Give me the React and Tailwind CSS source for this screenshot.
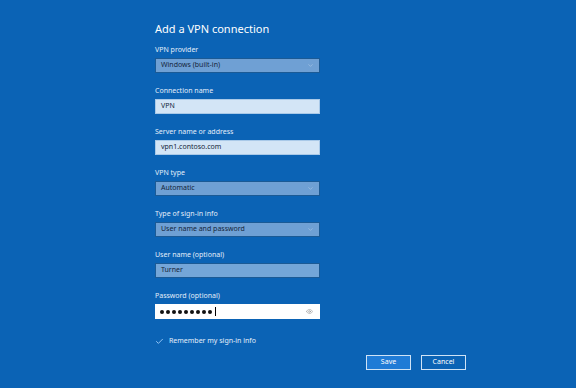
import { Check, ChevronDown, Eye } from "lucide-react";

const labelClass = "h-[10px] text-[7px] leading-[10px] text-[#e3eefa]";

function Field({ label, children }) {
  return (
    <div className="flex flex-col">
      <div className={labelClass}>{label}</div>
      <div className="mt-[3px]">{children}</div>
    </div>
  );
}

function SelectBox({ value }) {
  return (
    <div className="flex h-[15px] w-[165px] items-center justify-between border border-[#1b5a95] bg-[#6fa0d4] pl-[5px] pr-[5px] text-[7px] text-[#14253a]">
      <span>{value}</span>
      <ChevronDown size={7} strokeWidth={1.5} className="text-[#c4d8ec]" />
    </div>
  );
}

function TextBox({ value, variant = "light" }) {
  const styles = {
    light: "border-[#a9c9e8] bg-[#d3e5f6]",
    dim: "border-[#1b5a95] bg-[#74a6d8]",
  };
  return (
    <div
      className={`flex h-[15px] w-[165px] items-center border pl-[5px] text-[7px] text-[#14253a] ${styles[variant]}`}
    >
      {value}
    </div>
  );
}

export default function App() {
  return (
    <div
      className="h-[388px] w-[576px] overflow-hidden bg-[#0b63b5]"
      style={{ fontFamily: '"Noto Sans", "Open Sans", sans-serif' }}
    >
      <div className="ml-[155px] flex w-[311px] flex-col pt-[21px]">
        <h1 className="h-[16px] text-[11px] font-normal leading-[16px] text-white">
          Add a VPN connection
        </h1>

        <div className="mt-[8px] flex flex-col gap-[13px]">
          <Field label="VPN provider">
            <SelectBox value="Windows (built-in)" />
          </Field>
          <Field label="Connection name">
            <TextBox value="VPN" />
          </Field>
          <Field label="Server name or address">
            <TextBox value="vpn1.contoso.com" />
          </Field>
          <Field label="VPN type">
            <SelectBox value="Automatic" />
          </Field>
          <Field label="Type of sign-in info">
            <SelectBox value="User name and password" />
          </Field>
          <Field label="User name (optional)">
            <TextBox value="Turner" variant="dim" />
          </Field>
          <Field label="Password (optional)">
            <div className="flex h-[15px] w-[165px] items-center justify-between border border-white bg-white pl-[4px] pr-[6px]">
              <div className="flex items-center gap-[2px]">
                {Array.from({ length: 9 }).map((_, i) => (
                  <span key={i} className="h-[4px] w-[4px] rounded-full bg-[#111]" />
                ))}
                <span className="ml-[1px] h-[9px] w-px bg-black" />
              </div>
              <Eye size={7} strokeWidth={1.5} className="text-[#777]" />
            </div>
          </Field>
        </div>

        <div className="mt-[17px] flex items-center gap-[5px]">
          <Check size={9} strokeWidth={2.25} className="text-[#a8d4ff]" />
          <span className="text-[7px] leading-[10px] text-[#e3eefa]">
            Remember my sign-in info
          </span>
        </div>

        <div className="mt-[9px] flex justify-end gap-[10px]">
          <button className="flex h-[15px] w-[45px] items-center justify-center border border-[#cfe3f6] bg-[#1f7bd6] text-[7px] text-white">
            Save
          </button>
          <button className="flex h-[15px] w-[45px] items-center justify-center border border-[#cfe3f6] bg-[#0b63b5] text-[7px] text-white">
            Cancel
          </button>
        </div>
      </div>
    </div>
  );
}
